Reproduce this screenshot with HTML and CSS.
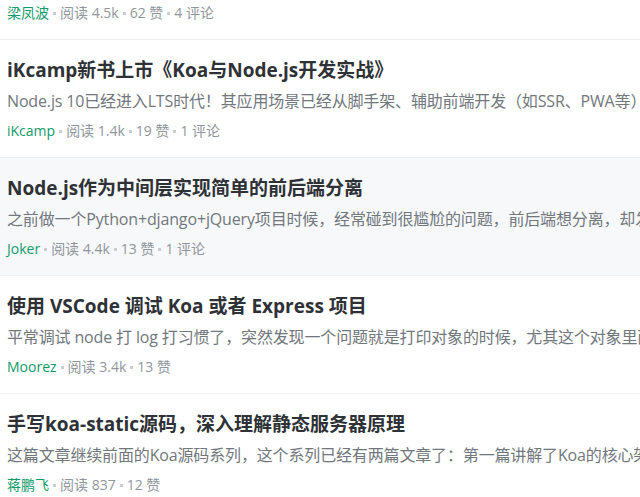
FILE: index.html
```html
<!DOCTYPE html>
<html lang="zh-CN">
<head>
<meta charset="utf-8">
<title>文章列表</title>
<link rel="stylesheet" href="styles.css">
</head>
<body>
<ul class="list">
  <li class="item partial">
    <div class="meta"><span class="author">梁凤波</span><i class="dot"></i><span>阅读 4.5k</span><i class="dot"></i><span>62 赞</span><i class="dot"></i><span>4 评论</span></div>
  </li>
  <li class="item">
    <div class="title">iKcamp新书上市《Koa与Node.js开发实战》</div>
    <div class="desc">Node.js 10已经进入LTS时代！其应用场景已经从脚手架、辅助前端开发（如SSR、PWA等）</div>
    <div class="meta"><span class="author">iKcamp</span><i class="dot"></i><span>阅读 1.4k</span><i class="dot"></i><span>19 赞</span><i class="dot"></i><span>1 评论</span></div>
  </li>
  <li class="item hover">
    <div class="title">Node.js作为中间层实现简单的前后端分离</div>
    <div class="desc">之前做一个Python+django+jQuery项目时候，经常碰到很尴尬的问题，前后端想分离，却发现</div>
    <div class="meta"><span class="author">Joker</span><i class="dot"></i><span>阅读 4.4k</span><i class="dot"></i><span>13 赞</span><i class="dot"></i><span>1 评论</span></div>
  </li>
  <li class="item">
    <div class="title">使用 VSCode 调试 Koa 或者 Express 项目</div>
    <div class="desc">平常调试 node 打 log 打习惯了，突然发现一个问题就是打印对象的时候，尤其这个对象里面</div>
    <div class="meta"><span class="author">Moorez</span><i class="dot"></i><span>阅读 3.4k</span><i class="dot"></i><span>13 赞</span></div>
  </li>
  <li class="item">
    <div class="title">手写koa-static源码，深入理解静态服务器原理</div>
    <div class="desc">这篇文章继续前面的Koa源码系列，这个系列已经有两篇文章了：第一篇讲解了Koa的核心架构</div>
    <div class="meta"><span class="author">蒋鹏飞</span><i class="dot"></i><span>阅读 837</span><i class="dot"></i><span>12 赞</span></div>
  </li>
</ul>
</body>
</html>
```
FILE: styles.css
```css
html, body {
  margin: 0;
  padding: 0;
  background: #ffffff;
}
body {
  font-family: "Open Sans", "Noto Sans CJK SC", sans-serif;
  overflow: hidden;
}
.list {
  list-style: none;
  margin: 0;
  padding: 0;
}
.item {
  padding: 17px 0 16px 7px;
  border-bottom: 1px solid #eeeff1;
  overflow: hidden;
}
.item.partial {
  padding-top: 3px;
}
.item.hover {
  background: #f7f8fa;
}
.title {
  font-size: 19px;
  line-height: 26px;
  font-weight: 700;
  color: #2e3135;
  white-space: nowrap;
}
.desc {
  margin-top: 7px;
  font-size: 16px;
  line-height: 22px;
  letter-spacing: -0.15px;
  color: #71777c;
  white-space: nowrap;
  overflow: hidden;
}
.meta {
  margin-top: 9px;
  display: flex;
  align-items: center;
  font-size: 14px;
  line-height: 20px;
  color: #8f969c;
  white-space: nowrap;
}
.partial .meta {
  margin-top: 0;
}
.author {
  color: #0f9a6a;
}
.dot {
  width: 3px;
  height: 3px;
  background: #c9ced3;
  margin: 0 4px;
}
```
